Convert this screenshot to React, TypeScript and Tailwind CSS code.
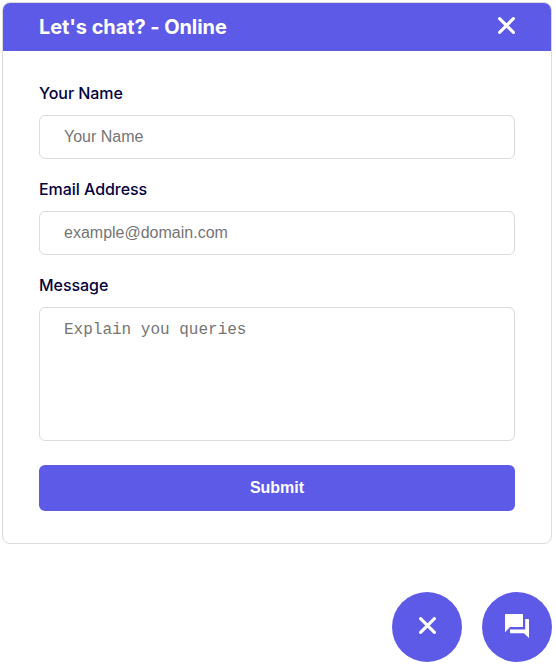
import React from 'react';

function CrossIcon() {
  return (
    <svg className="block h-[17px] w-[17px]" viewBox="0 0 17 17" fill="none" stroke="white" strokeWidth="3.1" strokeLinecap="round">
      <path d="M1.6 1.6 15.4 15.4M15.4 1.6 1.6 15.4" />
    </svg>
  );
}

function ForumIcon() {
  return (
    <svg className="block h-6 w-6" viewBox="0 0 24 24" fill="white">
      <path d="M.6 0h16.8q.6 0 .6.6v11.8q0 .6-.6.6H5L0 18.2V.6Q0 0 .6 0z" />
      <path d="M20.2 5h3.2q.6 0 .6.6V24l-5-4.8H5.6q-.6 0-.6-.6v-3h15.2z" />
    </svg>
  );
}

const labelClass = "block pt-[2px] text-base leading-5 font-medium tracking-[-0.05px] text-[#04003f] font-['Inter',sans-serif]";
const fieldClass =
  "mt-3 block w-full rounded-md border border-[#dbdbdb] bg-white px-6 text-base text-[#757575] placeholder:text-[#757575] outline-none";

export default function App() {
  return (
    <main className="h-[666px] w-[556px] overflow-hidden bg-white pt-[2px] pl-[2px]">
      <section className="h-[542px] w-[550px] overflow-hidden rounded-[8px] border border-[#dbdbdb]">
        <header className="flex h-12 items-center justify-between bg-[#5e5ae8] pr-9 pl-9">
          <h1 className="text-[20px] leading-6 font-bold tracking-[-0.08px] text-white font-['Inter',sans-serif]">Let's chat? - Online</h1>
          <button type="button" aria-label="Close chat" className="-mt-[3px]">
            <CrossIcon />
          </button>
        </header>
        <form className="px-9 pt-[30px]" onSubmit={(e) => e.preventDefault()}>
          <label className={labelClass} htmlFor="name">Your Name</label>
          <input id="name" className={fieldClass + " h-11 font-['Liberation_Sans',sans-serif]"} placeholder="Your Name" />
          <label className={labelClass + " mt-[18px]"} htmlFor="email">Email Address</label>
          <input id="email" className={fieldClass + " h-11 font-['Liberation_Sans',sans-serif]"} placeholder="example@domain.com" />
          <label className={labelClass + " mt-[18px]"} htmlFor="message">Message</label>
          <textarea
            id="message"
            className={fieldClass + " h-[134px] resize-none pt-[13px] leading-[18px] font-['Liberation_Mono',monospace]"}
            placeholder="Explain you queries"
          />
          <button
            type="submit"
            className="mt-6 block h-[46px] w-full rounded-md bg-[#5e5ae8] text-base font-bold text-white font-['Liberation_Sans',sans-serif]"
          >
            Submit
          </button>
        </form>
      </section>
      <div className="mt-12 flex w-[550px] justify-end gap-5">
        <button type="button" aria-label="Close" className="flex h-[70px] w-[70px] items-center justify-center rounded-full bg-[#5e5ae8] pb-[3px]">
          <CrossIcon />
        </button>
        <button type="button" aria-label="Open chat" className="flex h-[70px] w-[70px] items-center justify-center rounded-full bg-[#5e5ae8] pb-[2px]">
          <ForumIcon />
        </button>
      </div>
    </main>
  );
}
